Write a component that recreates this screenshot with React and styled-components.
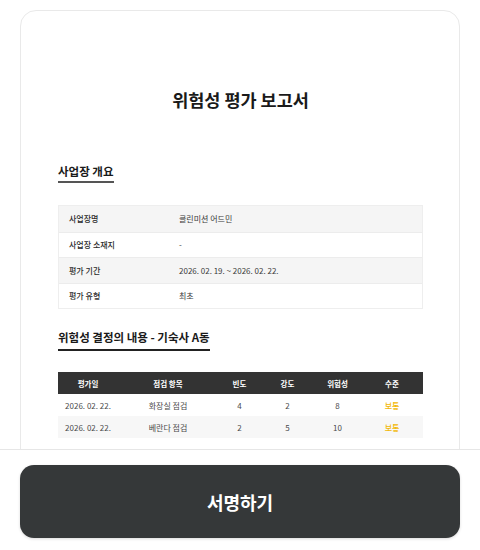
import React from "react";
import styled, { createGlobalStyle } from "styled-components";

const Global = createGlobalStyle`
  html, body { margin: 0; padding: 0; background: #ffffff; }
  body { font-family: "Noto Sans CJK KR", "Noto Sans", sans-serif; color: #222; }
  * { box-sizing: border-box; }
`;

const Page = styled.div`
  padding: 10px 20px 0 20px;
  height: 550px;
  overflow: hidden;
`;

const Card = styled.div`
  border: 1px solid #e9e9e9;
  border-radius: 16px;
  padding: 77px 36px 120px 37px;
  min-height: 600px;
  background: #fff;
`;

const Title = styled.h1`
  margin: 0;
  font-size: 17.5px;
  line-height: 24px;
  font-weight: 700;
  text-align: center;
  color: #1a1a1a;
`;

const Section = styled.section`
  display: flex;
  flex-direction: column;
  align-items: stretch;
  margin-top: ${(p) => p.$top}px;
`;

const SectionTitle = styled.h2`
  align-self: flex-start;
  margin: 0;
  font-size: 11.5px;
  line-height: 16px;
  font-weight: 700;
  color: #1a1a1a;
  padding-bottom: ${(p) => p.$pad || 2}px;
  border-bottom: 2px solid ${(p) => p.$line || "#333"};
`;

const InfoTable = styled.div`
  margin-top: 22px;
  border: 1px solid #eeeeee;
`;

const InfoRow = styled.div`
  display: grid;
  grid-template-columns: 110px 1fr;
  height: 25.5px;
  align-items: center;
  padding-left: 10px;
  background: ${(p) => (p.$shade ? "#f5f5f5" : "#ffffff")};
  border-top: ${(p) => (p.$first ? "none" : "1px solid #ececec")};
`;

const InfoLabel = styled.span`
  font-size: 8px;
  font-weight: 500;
  color: #2a2a2a;
`;

const InfoValue = styled.span`
  font-size: 8px;
  color: #3a3a3a;
`;

const GRID = "60px 100px 43px 53px 47px 1fr";

const RiskTable = styled.div`
  margin-top: 21px;
`;

const HeadRow = styled.div`
  display: grid;
  grid-template-columns: ${GRID};
  height: 22px;
  align-items: center;
  background: #333333;
`;

const HeadCell = styled.span`
  font-size: 7.5px;
  font-weight: 700;
  color: #ffffff;
  text-align: center;
`;

const BodyRow = styled.div`
  display: grid;
  grid-template-columns: ${GRID};
  height: 22px;
  align-items: center;
  background: ${(p) => (p.$shade ? "#f7f7f7" : "#ffffff")};
`;

const Cell = styled.span`
  font-size: 8px;
  color: ${(p) => (p.$level ? "#f2b705" : "#4a4a4a")};
  font-weight: ${(p) => (p.$level ? 500 : 400)};
  text-align: center;
`;

const Footer = styled.div`
  position: fixed;
  left: 0;
  right: 0;
  bottom: 0;
  height: 101px;
  background: #ffffff;
  border-top: 1px solid #e6e6e6;
  padding: 15px 20px 12px 20px;
`;

const SignButton = styled.button`
  width: 100%;
  height: 73px;
  border: none;
  border-radius: 14px;
  background: #353839;
  color: #ffffff;
  font-family: "Noto Sans CJK KR", "Noto Sans", sans-serif;
  font-size: 18px;
  font-weight: 700;
  box-shadow: 0 1px 3px rgba(0, 0, 0, 0.15);
`;

const info = [
  ["사업장명", "클린미션 어드민"],
  ["사업장 소재지", "-"],
  ["평가 기간", "2026. 02. 19. ~ 2026. 02. 22."],
  ["평가 유형", "최초"],
];

const heads = ["평가일", "점검 항목", "빈도", "강도", "위험성", "수준"];

const rows = [
  ["2026. 02. 22.", "화장실 점검", "4", "2", "8", "보통"],
  ["2026. 02. 22.", "베란다 점검", "2", "5", "10", "보통"],
];

export default function App() {
  return (
    <>
      <Global />
      <Page>
        <Card>
          <Title>위험성 평가 보고서</Title>
          <Section $top={51}>
            <SectionTitle $line="#555">사업장 개요</SectionTitle>
            <InfoTable>
              {info.map(([k, v], i) => (
                <InfoRow key={k} $shade={i % 2 === 0} $first={i === 0}>
                  <InfoLabel>{k}</InfoLabel>
                  <InfoValue>{v}</InfoValue>
                </InfoRow>
              ))}
            </InfoTable>
          </Section>
          <Section $top={20}>
            <SectionTitle $line="#222" $pad={4}>
              위험성 결정의 내용 - 기숙사 A동
            </SectionTitle>
            <RiskTable>
              <HeadRow>
                {heads.map((h) => (
                  <HeadCell key={h}>{h}</HeadCell>
                ))}
              </HeadRow>
              {rows.map((r, i) => (
                <BodyRow key={i} $shade={i % 2 === 1}>
                  {r.map((c, j) => (
                    <Cell key={j} $level={j === 5}>
                      {c}
                    </Cell>
                  ))}
                </BodyRow>
              ))}
            </RiskTable>
          </Section>
        </Card>
      </Page>
      <Footer>
        <SignButton>서명하기</SignButton>
      </Footer>
    </>
  );
}
